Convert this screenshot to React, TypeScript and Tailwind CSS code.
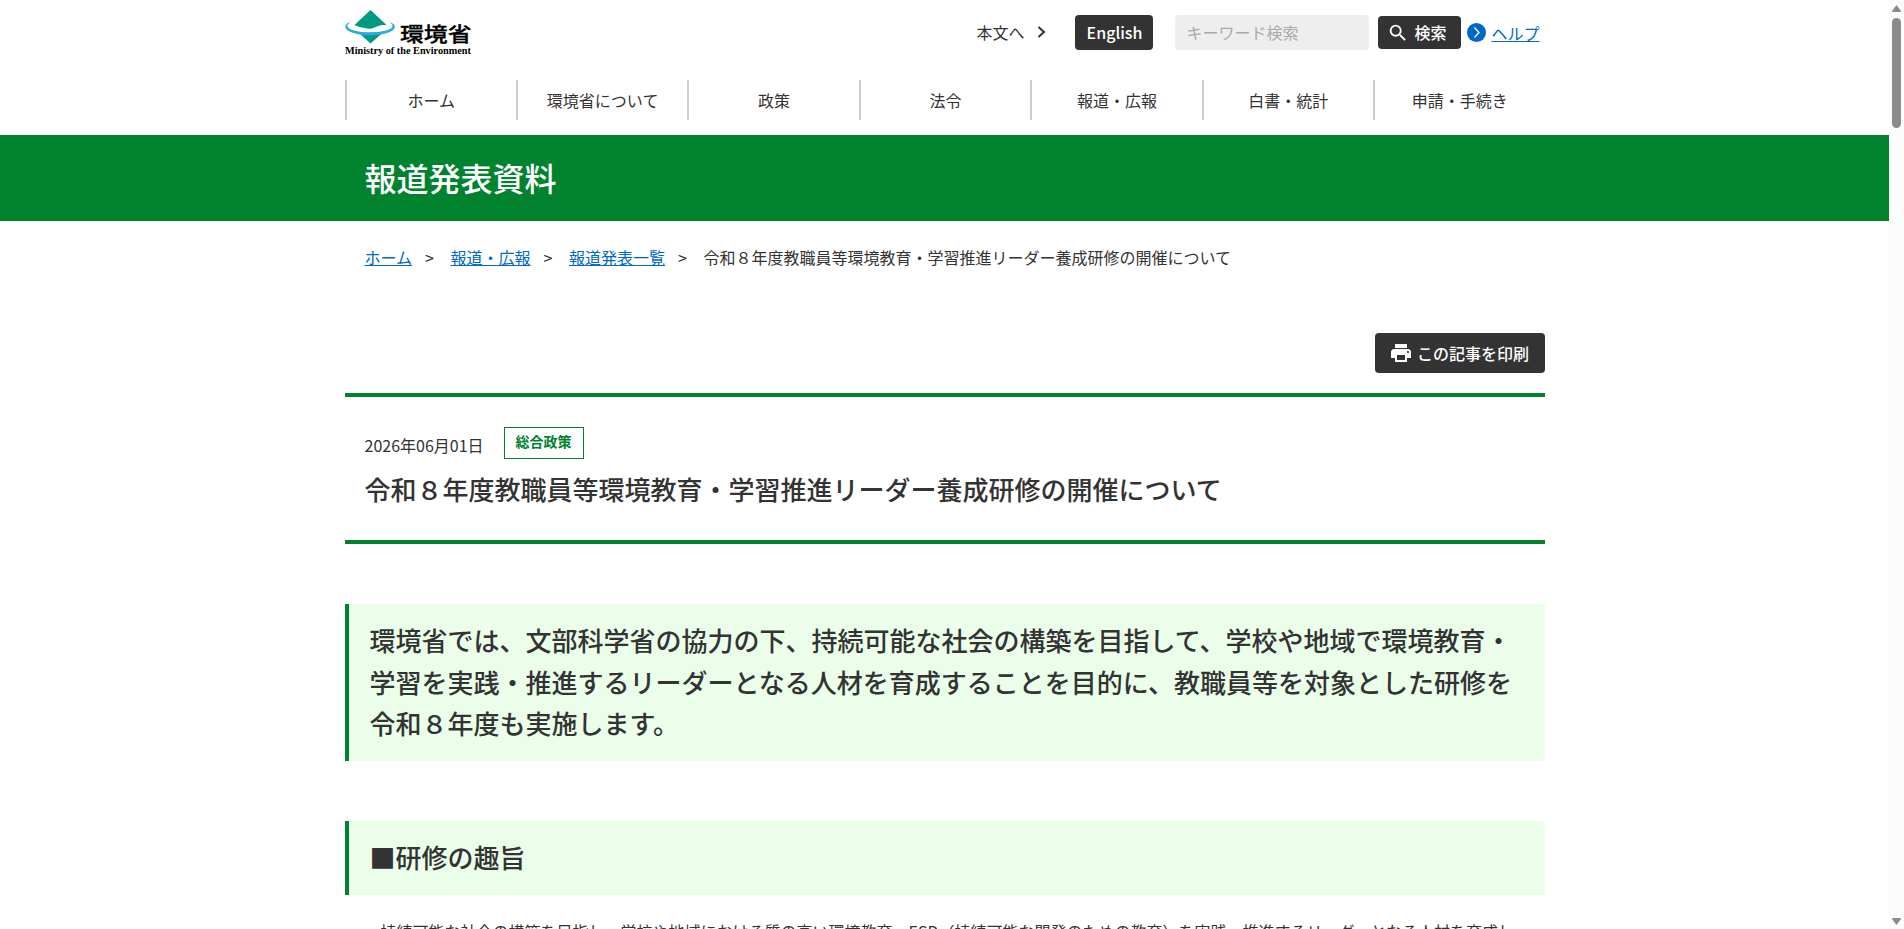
import { MdPrint, MdSearch } from "react-icons/md";

const NAV_ITEMS = ["ホーム", "環境省について", "政策", "法令", "報道・広報", "白書・統計", "申請・手続き"];

const TITLE = "令和８年度教職員等環境教育・学習推進リーダー養成研修の開催について";

const BREADCRUMBS = ["ホーム", "報道・広報", "報道発表一覧"];

function Logo() {
  return (
    <svg width="127" height="48" viewBox="0 0 127 48" className="block" role="img" aria-label="環境省">
      <path d="M25.500 0 L41.500 15 C36 14 31 20 22 18.500 C17 17.500 13.500 17 9.500 15 Z" fill="#009a82" />
      <path d="M13.500 22.500 H38 L25.500 33.500 Z" fill="#009a82" />
      <path
        d="M5.500 12 C-2 14 -1.500 19.500 7 22.500 C18 26.500 34 26 43.500 22.500 C52 19.500 52 14 44 12 C49.500 15 48.500 18.500 41 20.500 C31 23 18 23 9 20.500 C1.500 18.500 0.500 15 5.500 12 Z"
        fill="#2aace2"
      />
      <path d="M9 17.500 C14 18 20 21 27 18.500 C32 16.500 36 14.500 41 15 C37 17 34 21.500 25 21.500 C18 21.500 13 20 9 17.500 Z" fill="#fff" />
      <text x="55" y="31.500" fontSize="20.500" fontWeight="500" stroke="#000" strokeWidth="0.300" textLength="71.500" lengthAdjust="spacingAndGlyphs" className="font-['Noto_Sans_CJK_JP',sans-serif]">
        環境省
      </text>
      <text x="0" y="43.500" fontSize="9.500" fontWeight="700" textLength="126" lengthAdjust="spacingAndGlyphs" className="font-['Liberation_Serif',serif]">
        Ministry of the Environment
      </text>
    </svg>
  );
}

function Header() {
  return (
    <header className="mx-auto h-[135px] w-[1200px]">
      <div className="flex h-20 items-start justify-between">
        <div className="pt-2.5">
          <Logo />
        </div>
        <div className="mt-[15px] mr-[5px] flex h-[35px] items-center">
          <a className="flex items-center pb-px">
            本文へ
            <svg width="9" height="12" viewBox="0 0 9 12" className="ml-[13px]">
              <path d="M1.500 1 L7 6 L1.500 11" fill="none" stroke="#333" strokeWidth="2" />
            </svg>
          </a>
          <a className="ml-[29px] flex h-[35px] w-[78px] items-center justify-center rounded bg-[#333] pb-0.5 font-medium text-white">
            English
          </a>
          <input
            placeholder="キーワード検索"
            className="ml-[22px] h-[35px] w-[194px] rounded bg-[#eee] px-[11px] pb-0.5 placeholder:text-[#aaa]"
          />
          <button className="ml-[9px] flex h-[33px] w-[83px] items-center rounded bg-[#333] pb-0.5 pl-[9px] font-medium text-white">
            <MdSearch size={22} className="mt-0.5 mr-[5px]" />
            検索
          </button>
          <svg width="19" height="19" viewBox="0 0 19 19" className="ml-1.5">
            <circle cx="9.500" cy="9.500" r="9.500" fill="#0068c8" />
            <path d="M7.500 4.500 L12 9.500 L7.500 14.500" fill="none" stroke="#fff" strokeWidth="1.300" />
          </svg>
          <a className="ml-[5px] text-[#0068c8] underline">ヘルプ</a>
        </div>
      </div>
      <nav className="grid grid-cols-7">
        {NAV_ITEMS.map((item) => (
          <a key={item} className="flex h-10 items-center justify-center border-l-2 border-[#ccc]">
            {item}
          </a>
        ))}
      </nav>
    </header>
  );
}

function Breadcrumbs() {
  return (
    <div className="flex h-6 items-center px-5">
      {BREADCRUMBS.map((label) => (
        <span key={label} className="flex">
          <a className="text-[#0068c8] underline">{label}</a>
          <span className="mr-[16.6px] ml-[13px]">&gt;</span>
        </span>
      ))}
      <span>{TITLE}</span>
    </div>
  );
}

function Scrollbar() {
  return (
    <div className="flex w-[15px] shrink-0 flex-col items-center justify-between bg-[#fcfcfc] pt-[5px] pb-1">
      <div className="flex flex-col items-center gap-1.5">
        <svg width="9" height="7" viewBox="0 0 9 7">
          <path d="M4.500 0 L9 6 Q9 7 8 7 H1 Q0 7 0 6 Z" fill="#8b8b8b" />
        </svg>
        <div className="h-[110px] w-[9px] rounded-full bg-[#8b8b8b]" />
      </div>
      <svg width="9" height="7" viewBox="0 0 9 7">
        <path d="M4.500 7 L9 1 Q9 0 8 0 H1 Q0 0 0 1 Z" fill="#8b8b8b" />
      </svg>
    </div>
  );
}

export default function App() {
  return (
    <div
      lang="ja"
      className="flex h-[929px] w-[1904px] overflow-hidden bg-white font-['Noto_Sans_CJK_JP',sans-serif] text-base text-[#333]"
    >
      <div className="h-[929px] flex-1 overflow-hidden">
        <Header />
        <div className="h-[86px] bg-[#00822f]">
          <div className="mx-auto flex h-full w-[1200px] items-center px-5 pb-0.5">
            <h1 className="text-[32px] font-medium text-white">報道発表資料</h1>
          </div>
        </div>
        <main className="mx-auto w-[1200px] pt-6">
          <Breadcrumbs />
          <div className="mt-16 flex justify-end">
            <button className="flex h-10 w-[170px] items-center justify-center rounded bg-[#333] pr-px font-medium text-white">
              <MdPrint size={24} className="mr-1" />
              この記事を印刷
            </button>
          </div>
          <div className="mt-5 h-[151px] border-y-4 border-[#00822f] px-5 pt-[30px]">
            <div className="flex h-8 items-start">
              <p className="pt-1.5 leading-6">2026年06月01日</p>
              <p className="ml-5 flex h-8 w-20 items-center justify-center border border-[#00822f] pb-1 text-sm font-bold text-[#00822f]">
                総合政策
              </p>
            </div>
            <h2 className="mt-[9px] text-[26px] leading-[1.6] font-medium">{TITLE}</h2>
          </div>
          <div className="mt-[60px] h-[157px] border-l-4 border-[#00822f] bg-[#eafeea] pt-[15px] pl-[21px] text-[26px] leading-[1.6] font-medium">
            <p>環境省では、文部科学省の協力の下、持続可能な社会の構築を目指して、学校や地域で環境教育・</p>
            <p>学習を実践・推進するリーダーとなる人材を育成することを目的に、教職員等を対象とした研修を</p>
            <p>令和８年度も実施します。</p>
          </div>
          <h3 className="mt-[60px] h-[74px] border-l-4 border-[#00822f] bg-[#eafeea] pt-[15px] pl-[21px] text-[26px] leading-[1.6] font-medium">
            ■研修の趣旨
          </h3>
          <p className="mt-6 pl-9 leading-[1.6] whitespace-nowrap">
            持続可能な社会の構築を目指し、学校や地域における質の高い環境教育・ESD（持続可能な開発のための教育）を実践・推進するリーダーとなる人材を育成し
          </p>
        </main>
      </div>
      <Scrollbar />
    </div>
  );
}
